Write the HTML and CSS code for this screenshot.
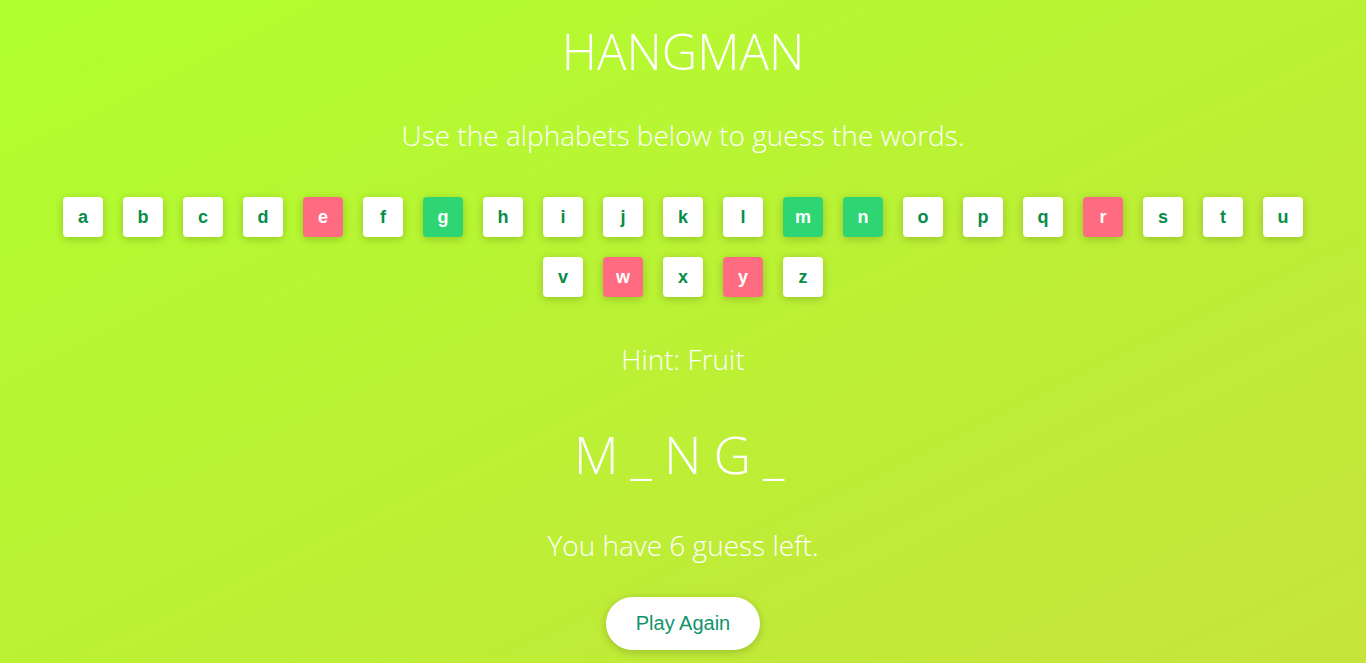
FILE: index.html
```html
<!DOCTYPE html>
<html lang="en">
<head>
<meta charset="utf-8">
<title>Hangman</title>
<link rel="stylesheet" href="styles.css">
</head>
<body>
<main class="game">
  <h1 class="title">HANGMAN</h1>
  <p class="subtitle">Use the alphabets below to guess the words.</p>
  <div class="letters">
    <button class="key">a</button>
    <button class="key">b</button>
    <button class="key">c</button>
    <button class="key">d</button>
    <button class="key wrong">e</button>
    <button class="key">f</button>
    <button class="key right">g</button>
    <button class="key">h</button>
    <button class="key">i</button>
    <button class="key">j</button>
    <button class="key">k</button>
    <button class="key">l</button>
    <button class="key right">m</button>
    <button class="key right">n</button>
    <button class="key">o</button>
    <button class="key">p</button>
    <button class="key">q</button>
    <button class="key wrong">r</button>
    <button class="key">s</button>
    <button class="key">t</button>
    <button class="key">u</button>
    <button class="key">v</button>
    <button class="key wrong">w</button>
    <button class="key">x</button>
    <button class="key wrong">y</button>
    <button class="key">z</button>
  </div>
  <p class="hint">Hint: Fruit</p>
  <p class="word">M_NG_</p>
  <p class="status">You have 6 guess left.</p>
  <button class="again">Play Again</button>
</main>
</body>
</html>
```
FILE: styles.css
```css
html {
  min-height: 100%;
  background: linear-gradient(to bottom right, #b0ff2e, #c6e43b);
}
body {
  margin: 0;
  min-height: 100vh;
  font-family: "Open Sans", "Segoe UI", sans-serif;
  font-weight: 300;
  color: #ffffff;
}
.game {
  display: flex;
  flex-direction: column;
  align-items: center;
  text-align: center;
}
.title {
  margin: 21px 0 0;
  font-size: 49px;
  font-weight: 300;
  line-height: 60px;
}
.subtitle {
  margin: 34px 0 0;
  font-size: 28px;
  line-height: 40px;
}
.letters {
  display: flex;
  flex-wrap: wrap;
  justify-content: center;
  width: 1300px;
  margin-top: 32px;
}
.key {
  width: 40px;
  height: 40px;
  margin: 10px;
  padding: 0;
  border: none;
  border-radius: 4px;
  background: #ffffff;
  color: #088c48;
  font-family: "Liberation Sans", Arial, sans-serif;
  font-weight: 700;
  font-size: 18px;
  box-shadow: 0 2px 10px rgba(0, 0, 0, 0.2);
}
.key.wrong {
  background: #ff6b81;
  color: #ffffff;
}
.key.right {
  background: #2ed573;
  color: #ffffff;
}
.hint {
  margin: 32px 0 0;
  font-size: 28px;
  line-height: 40px;
}
.word {
  margin: 40px 0 0;
  font-size: 52px;
  letter-spacing: 12px;
  text-indent: 4px;
  line-height: 70px;
}
.status {
  margin: 36px 0 0;
  font-size: 28px;
  line-height: 40px;
}
.again {
  margin-top: 32px;
  padding: 15px 30px;
  border: none;
  border-radius: 30px;
  background: #ffffff;
  color: #12946a;
  font-family: "Liberation Sans", Arial, sans-serif;
  font-size: 20px;
  line-height: 23px;
  box-shadow: 0 2px 10px rgba(0, 0, 0, 0.2);
}
```
